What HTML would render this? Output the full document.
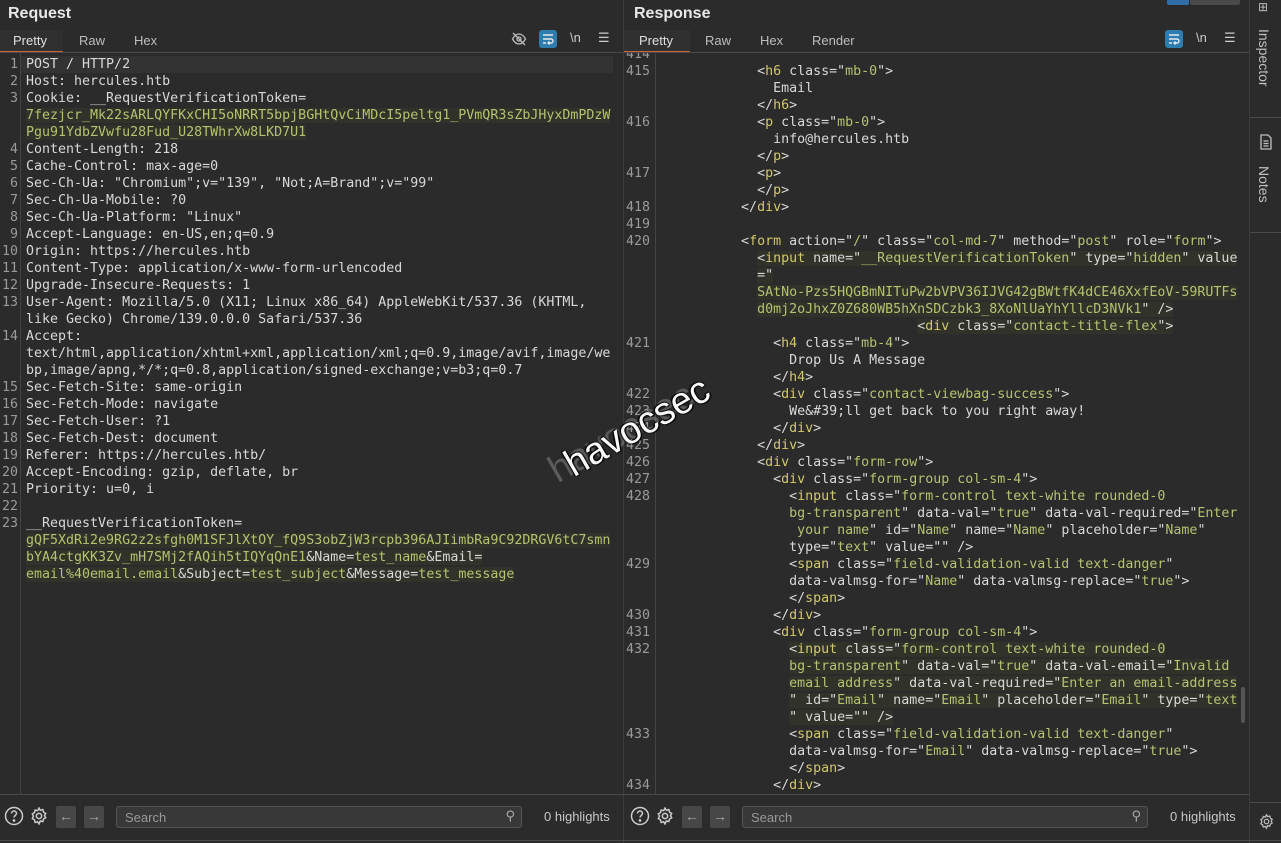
<!DOCTYPE html>
<html><head><meta charset="utf-8"><style>
*{margin:0;padding:0;box-sizing:border-box}
body{width:1281px;height:843px;background:#2b2b2b;overflow:hidden;position:relative;font-family:"Liberation Sans","DejaVu Sans",sans-serif;color:#d6d6d6}
.abs{position:absolute}
.title{font-size:16px;font-weight:bold;color:#e8e8e8;top:5px}
.tab{font-size:13px;color:#bdbdbd;top:33px}
.code{font-family:"DejaVu Sans Mono","Liberation Mono",monospace;font-size:13.3px;white-space:pre;line-height:17px;color:#d8d8d8}
.ln{font-family:"DejaVu Sans Mono","Liberation Mono",monospace;font-size:13.3px;line-height:17px;color:#9a9a9a;white-space:pre}
.g{color:#b6c270}
.t{color:#d2c86a}
.hl{background:rgba(140,150,40,0.07)}
.vline{position:absolute;width:1px;background:#444}
.hline{position:absolute;height:1px;background:#4a4a4a}
.search{position:absolute;top:806px;height:22px;background:#383838;border:1px solid #555;border-radius:3px;font-size:13px;color:#999;padding:3px 8px}
.hi{position:absolute;top:809px;font-size:13px;color:#c8c8c8}
.btn{position:absolute;top:806px;width:20px;height:22px;background:#474747;border-radius:2px;color:#aaa;font-size:14px;text-align:center;line-height:21px}
</style></head><body>

<div class="abs title" style="left:8px">Request</div>
<div class="abs" style="left:0;top:30px;width:63px;height:22px;background:#303030"></div>
<div class="abs tab" style="left:13px;color:#e0e0e0">Pretty</div>
<div class="abs tab" style="left:79px">Raw</div>
<div class="abs tab" style="left:134px">Hex</div>
<div class="abs" style="left:0;top:51px;width:63px;height:2px;background:#c8623a"></div>
<div class="hline" style="left:0;top:52px;width:623px"></div>
<svg class="abs" style="left:511px;top:31px" width="16" height="16" viewBox="0 0 16 16" fill="none" stroke="#bbb" stroke-width="1.3"><path d="M1.5 8c2-3.5 4-5 6.5-5s4.5 1.5 6.5 5c-2 3.5-4 5-6.5 5S3.5 11.5 1.5 8z"/><circle cx="8" cy="8" r="2"/><path d="M2 2l12 12"/></svg>
<div class="abs" style="left:539px;top:30px;width:18px;height:18px;background:#2f7cae;border-radius:3px"></div>
<svg class="abs" style="left:541px;top:32px" width="14" height="14" viewBox="0 0 14 14" fill="none" stroke="#e8e8e8" stroke-width="1.4"><path d="M2 3h10M2 7h8a2 2 0 010 4H7M2 11h3M8.5 9.5L7 11l1.5 1.5"/></svg>
<div class="abs" style="left:570px;top:30px;font-size:13px;color:#ccc">\n</div>
<div class="abs" style="left:598px;top:30px;font-size:13px;color:#ccc">☰</div>

<div class="vline" style="left:20px;top:53px;height:742px"></div>
<div class="abs" style="left:21px;top:56px;width:592px;height:17px;background:#333"></div>
<div class="abs ln" style="left:0;top:56px;width:18px;text-align:right"> 1
 2
 3


 4
 5
 6
 7
 8
 9
10
11
12
13

14


15
16
17
18
19
20
21
22
23</div>
<div class="abs code" style="left:26px;top:56px">POST / HTTP/2
Host: hercules.htb
Cookie: __RequestVerificationToken=
<span class="g hl">7fezjcr_Mk22sARLQYFKxCHI5oNRRT5bpjBGHtQvCiMDcI5peltg1_PVmQR3sZbJHyxDmPDzW</span>
<span class="g hl">Pgu91YdbZVwfu28Fud_U28TWhrXw8LKD7U1</span>
Content-Length: 218
Cache-Control: max-age=0
Sec-Ch-Ua: "Chromium";v="139", "Not;A=Brand";v="99"
Sec-Ch-Ua-Mobile: ?0
Sec-Ch-Ua-Platform: "Linux"
Accept-Language: en-US,en;q=0.9
Origin: https://hercules.htb
Content-Type: application/x-www-form-urlencoded
Upgrade-Insecure-Requests: 1
User-Agent: Mozilla/5.0 (X11; Linux x86_64) AppleWebKit/537.36 (KHTML,
like Gecko) Chrome/139.0.0.0 Safari/537.36
Accept:
text/html,application/xhtml+xml,application/xml;q=0.9,image/avif,image/we
bp,image/apng,*/*;q=0.8,application/signed-exchange;v=b3;q=0.7
Sec-Fetch-Site: same-origin
Sec-Fetch-Mode: navigate
Sec-Fetch-User: ?1
Sec-Fetch-Dest: document
Referer: https://hercules.htb/
Accept-Encoding: gzip, deflate, br
Priority: u=0, i

__RequestVerificationToken=
<span class="g hl">gQF5XdRi2e9RG2z2sfgh0M1SFJlXtOY_fQ9S3obZjW3rcpb396AJIimbRa9C92DRGV6tC7smn</span>
<span class="hl"><span class="g">bYA4ctgKK3Zv_mH7SMj2fAQih5tIQYqQnE1</span>&amp;Name=<span class="g">test_name</span>&amp;Email=</span>
<span class="hl"><span class="g">email%40email.email</span>&amp;Subject=<span class="g">test_subject</span>&amp;Message=<span class="g">test_message</span></span></div>

<div class="vline" style="left:623px;top:0;height:843px;background:#3c3c3c"></div>

<div class="abs title" style="left:634px">Response</div>
<div class="abs" style="left:624px;top:30px;width:66px;height:22px;background:#303030"></div>
<div class="abs tab" style="left:639px;color:#e0e0e0">Pretty</div>
<div class="abs tab" style="left:705px">Raw</div>
<div class="abs tab" style="left:760px">Hex</div>
<div class="abs tab" style="left:812px">Render</div>
<div class="abs" style="left:624px;top:51px;width:66px;height:2px;background:#c8623a"></div>
<div class="hline" style="left:624px;top:52px;width:625px"></div>
<div class="abs" style="left:1165px;top:30px;width:18px;height:18px;background:#2f7cae;border-radius:3px"></div>
<svg class="abs" style="left:1167px;top:32px" width="14" height="14" viewBox="0 0 14 14" fill="none" stroke="#e8e8e8" stroke-width="1.4"><path d="M2 3h10M2 7h8a2 2 0 010 4H7M2 11h3M8.5 9.5L7 11l1.5 1.5"/></svg>
<div class="abs" style="left:1196px;top:30px;font-size:13px;color:#ccc">\n</div>
<div class="abs" style="left:1224px;top:30px;font-size:13px;color:#ccc">☰</div>
<div class="abs" style="left:1167px;top:0;width:22px;height:5px;background:#2f6ea8;border-radius:0 0 2px 2px"></div>
<div class="abs" style="left:1190px;top:0;width:50px;height:5px;background:#4a4a4a;border-radius:0 0 2px 2px"></div>

<div class="vline" style="left:655px;top:53px;height:742px"></div>
<div class="abs" style="left:624px;top:53px;width:620px;height:740px;overflow:hidden">
<div class="abs ln" style="left:2px;top:-7px">414
415


416


417

418
419
420





421


422
423
424
425
426
427
428



429


430
431
432




433


434</div>
<div class="abs code" style="left:37px;top:-7px">
            &lt;<span class="t">h6</span> class="<span class="g">mb-0</span>"&gt;
              Email
            &lt;/<span class="t">h6</span>&gt;
            &lt;<span class="t">p</span> class="<span class="g">mb-0</span>"&gt;
              info@hercules.htb
            &lt;/<span class="t">p</span>&gt;
            &lt;<span class="t">p</span>&gt;
            &lt;/<span class="t">p</span>&gt;
          &lt;/<span class="t">div</span>&gt;

          &lt;<span class="t">form</span> action="<span class="g">/</span>" class="<span class="g">col-md-7</span>" method="<span class="g">post</span>" role="<span class="g">form</span>"&gt;
            <span class="hl">&lt;<span class="t">input</span> name="<span class="g">__RequestVerificationToken</span>" type="<span class="g">hidden</span>" value</span>
            <span class="hl">="</span>
            <span class="hl g">SAtNo-Pzs5HQGBmNITuPw2bVPV36IJVG42gBWtfK4dCE46XxfEoV-59RUTFs</span>
            <span class="hl"><span class="g">d0mj2oJhxZ0Z680WB5hXnSDCzbk3_8XoNlUaYhYllcD3NVk1</span>" /&gt;</span>
                                <span class="hl">&lt;<span class="t">div</span> class="<span class="g">contact-title-flex</span>"&gt;</span>
              &lt;<span class="t">h4</span> class="<span class="g">mb-4</span>"&gt;
                Drop Us A Message
              &lt;/<span class="t">h4</span>&gt;
              &lt;<span class="t">div</span> class="<span class="g">contact-viewbag-success</span>"&gt;
                We&amp;#39;ll get back to you right away!
              &lt;/<span class="t">div</span>&gt;
            &lt;/<span class="t">div</span>&gt;
            &lt;<span class="t">div</span> class="<span class="g">form-row</span>"&gt;
              &lt;<span class="t">div</span> class="<span class="g">form-group col-sm-4</span>"&gt;
                &lt;<span class="t">input</span> class="<span class="g">form-control text-white rounded-0</span>
                <span class="g">bg-transparent</span>" data-val="<span class="g">true</span>" data-val-required="<span class="g">Enter</span>
                <span class="g"> your name</span>" id="<span class="g">Name</span>" name="<span class="g">Name</span>" placeholder="<span class="g">Name</span>"
                type="<span class="g">text</span>" value="" /&gt;
                &lt;<span class="t">span</span> class="<span class="g">field-validation-valid text-danger</span>"
                data-valmsg-for="<span class="g">Name</span>" data-valmsg-replace="<span class="g">true</span>"&gt;
                &lt;/<span class="t">span</span>&gt;
              &lt;/<span class="t">div</span>&gt;
              &lt;<span class="t">div</span> class="<span class="g">form-group col-sm-4</span>"&gt;
                <span class="hl">&lt;<span class="t">input</span> class="<span class="g">form-control text-white rounded-0</span></span>
                <span class="hl"><span class="g">bg-transparent</span>" data-val="<span class="g">true</span>" data-val-email="<span class="g">Invalid</span></span>
                <span class="hl"><span class="g">email address</span>" data-val-required="<span class="g">Enter an email-address</span></span>
                <span class="hl">" id="<span class="g">Email</span>" name="<span class="g">Email</span>" placeholder="<span class="g">Email</span>" type="<span class="g">text</span></span>
                <span class="hl">" value="" /&gt;</span>
                &lt;<span class="t">span</span> class="<span class="g">field-validation-valid text-danger</span>"
                data-valmsg-for="<span class="g">Email</span>" data-valmsg-replace="<span class="g">true</span>"&gt;
                &lt;/<span class="t">span</span>&gt;
              &lt;/<span class="t">div</span>&gt;</div>
</div>
<div class="abs" style="left:1241px;top:687px;width:4px;height:36px;background:#555;border-radius:2px"></div>

<div class="vline" style="left:1249px;top:0;height:843px;background:#3c3c3c"></div>
<div class="hline" style="left:1250px;top:117px;width:31px"></div>
<div class="hline" style="left:1250px;top:232px;width:31px"></div>
<div class="hline" style="left:1250px;top:802px;width:31px"></div>
<div class="abs" style="left:1258px;top:0;font-size:12px;color:#bbb">⊞</div>
<div class="abs" style="left:1272px;top:29px;transform:rotate(90deg);transform-origin:0 0;font-size:14px;color:#c0c0c0">Inspector</div>
<svg class="abs" style="left:1259px;top:134px" width="14" height="16" viewBox="0 0 14 16" fill="none" stroke="#c0c0c0" stroke-width="1.3"><path d="M2 1h7l3 3v11H2z M4.5 7h5M4.5 9.5h5M4.5 12h5"/></svg>
<div class="abs" style="left:1272px;top:166px;transform:rotate(90deg);transform-origin:0 0;font-size:14px;color:#c0c0c0">Notes</div>
<svg class="abs" style="left:1258px;top:813px" width="17" height="17" viewBox="0 0 24 24" fill="none" stroke="#bbb" stroke-width="1.8"><circle cx="12" cy="12" r="3.2"/><path d="M12 2.5l1.6 2.6 3-.8.8 3 2.6 1.6-1.4 2.6 1.4 2.6-2.6 1.6-.8 3-3-.8L12 21.5l-1.6-2.6-3 .8-.8-3-2.6-1.6L5.4 12 4 9.4l2.6-1.6.8-3 3 .8z"/></svg>

<div class="hline" style="left:0;top:794px;width:1249px"></div>
<div class="hline" style="left:0;top:840px;width:1281px"></div>
<svg class="abs" style="left:4px;top:806px" width="20" height="20" viewBox="0 0 20 20" fill="none" stroke="#ccc" stroke-width="1.5"><circle cx="10" cy="10" r="8.5"/><path d="M7.5 7.5a2.5 2.5 0 115 0c0 1.8-2.5 2-2.5 4"/><circle cx="10" cy="14.5" r=".6" fill="#ccc"/></svg>
<svg class="abs" style="left:29px;top:806px" width="20" height="20" viewBox="0 0 24 24" fill="none" stroke="#ccc" stroke-width="1.8"><circle cx="12" cy="12" r="3.2"/><path d="M12 2.5l1.6 2.6 3-.8.8 3 2.6 1.6-1.4 2.6 1.4 2.6-2.6 1.6-.8 3-3-.8L12 21.5l-1.6-2.6-3 .8-.8-3-2.6-1.6L5.4 12 4 9.4l2.6-1.6.8-3 3 .8z"/></svg>
<div class="btn" style="left:56px">←</div>
<div class="btn" style="left:84px">→</div>
<div class="search" style="left:116px;width:406px">Search<span style="position:absolute;right:6px;top:1px;color:#aaa">⚲</span></div>
<div class="hi" style="left:544px">0 highlights</div>

<svg class="abs" style="left:630px;top:806px" width="20" height="20" viewBox="0 0 20 20" fill="none" stroke="#ccc" stroke-width="1.5"><circle cx="10" cy="10" r="8.5"/><path d="M7.5 7.5a2.5 2.5 0 115 0c0 1.8-2.5 2-2.5 4"/><circle cx="10" cy="14.5" r=".6" fill="#ccc"/></svg>
<svg class="abs" style="left:655px;top:806px" width="20" height="20" viewBox="0 0 24 24" fill="none" stroke="#ccc" stroke-width="1.8"><circle cx="12" cy="12" r="3.2"/><path d="M12 2.5l1.6 2.6 3-.8.8 3 2.6 1.6-1.4 2.6 1.4 2.6-2.6 1.6-.8 3-3-.8L12 21.5l-1.6-2.6-3 .8-.8-3-2.6-1.6L5.4 12 4 9.4l2.6-1.6.8-3 3 .8z"/></svg>
<div class="btn" style="left:682px">←</div>
<div class="btn" style="left:710px">→</div>
<div class="search" style="left:742px;width:406px">Search<span style="position:absolute;right:6px;top:1px;color:#aaa">⚲</span></div>
<div class="hi" style="left:1170px">0 highlights</div>

<div class="abs" style="left:552px;top:452px;font-size:38px;color:rgba(150,150,150,0.45);transform:rotate(-30deg);transform-origin:0 50%;white-space:nowrap">havocsec</div>
<div class="abs" style="left:568px;top:446px;font-size:38px;color:#fafafa;transform:rotate(-30deg);transform-origin:0 50%;white-space:nowrap;text-shadow:0 0 2px #000,1px 1px 1px #000,-1px -1px 1px #000">havocsec</div>
</body></html>
